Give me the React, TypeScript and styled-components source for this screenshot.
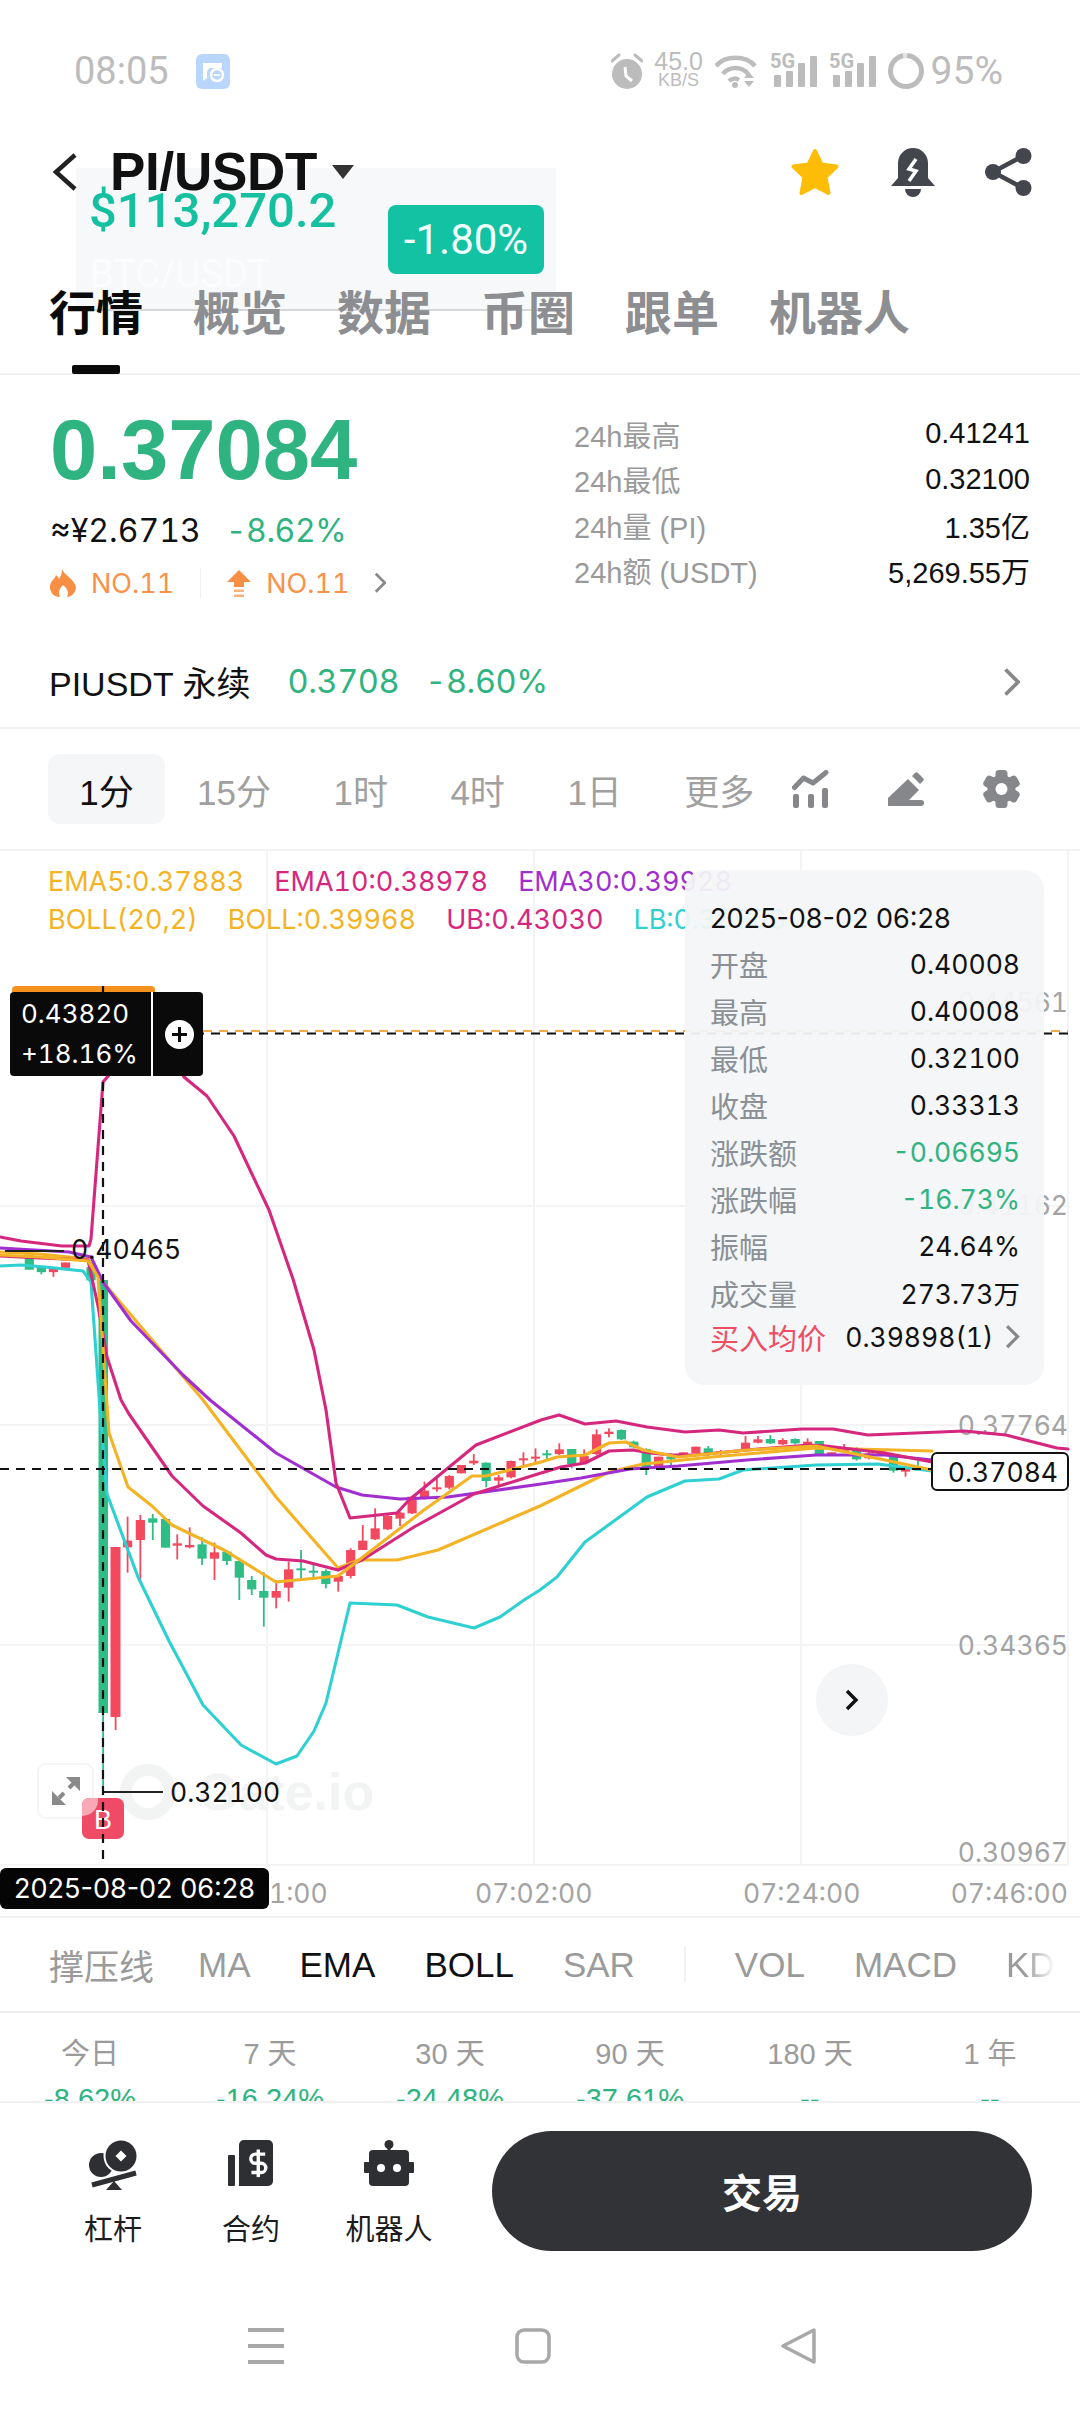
import React from 'react';
import styled, { createGlobalStyle } from 'styled-components';

const SANS = '"Liberation Sans", "Noto Sans CJK SC", sans-serif';
const CHART = 'Inter, "Noto Sans CJK SC", sans-serif';
const GREEN = '#2fb380';
const RED = '#f2495e';
const CANDLE_GREEN = '#2dbd85';
const MAGENTA = '#d6277f';
const ORANGE = '#f4b324';
const PURPLE = '#a12fd0';
const CYAN = '#2fd0d2';

const GlobalStyle = createGlobalStyle`
  html, body { margin: 0; padding: 0; background: #fff; }
  * { box-sizing: border-box; }
`;

const Page = styled.div`
  position: relative;
  width: 1080px;
  height: 2412px;
  overflow: hidden;
  background: #fff;
  font-family: ${SANS};
  color: #111;
`;

/* status bar */
const StatusBar = styled.div`
  height: 142px;
  padding: 0 77px 0 74px;
  display: flex;
  align-items: center;
  color: #bcbcbc;
`;
const Clock = styled.span`
  font-size: 38px;
  font-family: Roboto, sans-serif;
  margin-right: 27px;
`;
const StatusIcons = styled.div`
  margin-left: auto;
  display: flex;
  align-items: center;
  gap: 11px;
`;
const Speed = styled.div`
  width: 50px;
  display: flex;
  flex-direction: column;
  align-items: center;
  line-height: 19px;
  font-size: 25px;
  small { font-size: 18px; }
`;
const Battery = styled.span`
  font-size: 39px;
  font-family: Roboto, sans-serif;
  margin-left: -4px;
`;

/* header */
const NavRow = styled.div`
  height: 60px;
  padding: 0 48px 0 52px;
  display: flex;
  align-items: center;
  position: relative;
  z-index: 1;
`;
const Title = styled.span`
  font-size: 53px;
  font-weight: 700;
  letter-spacing: -0.3px;
  margin-left: 32px;
  margin-right: 15px;
  line-height: 60px;
`;
const NavActions = styled.div`
  margin-left: auto;
  display: flex;
  align-items: center;
`;
const PromoCard = styled.div`
  position: absolute;
  left: 76px;
  top: 168px;
  width: 480px;
  height: 143px;
  background: #f7f8f9;
  border-bottom: 2px solid #d6d7d8;
`;
const PromoPrice = styled.span`
  position: absolute;
  left: 13px;
  top: 14px;
  font-size: 49px;
  font-family: Roboto, sans-serif;
  font-weight: 500;
  color: #14c09f;
`;
const PromoBadge = styled.span`
  position: absolute;
  left: 312px;
  top: 37px;
  width: 156px;
  height: 69px;
  border-radius: 8px;
  background: #13c2a3;
  color: #f2fffc;
  display: flex;
  align-items: center;
  justify-content: center;
  font-size: 42px;
  font-family: Roboto, sans-serif;
`;
const PromoPair = styled.span`
  position: absolute;
  left: 14px;
  top: 84px;
  font-size: 38px;
  font-family: Roboto, sans-serif;
  color: #fbfcfc;
`;
const Tabs = styled.div`
  position: relative;
  height: 173px;
  padding: 90px 0 0 49px;
  display: flex;
  gap: 50px;
  border-bottom: 2px solid #f0f0f0;
`;
const Tab = styled.div<{ $active?: boolean }>`
  position: relative;
  font-size: 47px;
  line-height: 44px;
  font-weight: 700;
  height: 44px;
  color: ${(p) => (p.$active ? '#0a0a0a' : '#8c8e91')};
  ${(p) =>
    p.$active &&
    `&::after {
      content: '';
      position: absolute;
      left: 23px;
      top: 73px;
      width: 48px;
      height: 9px;
      border-radius: 2px;
      background: #0a0a0a;
    }`}
`;

/* price block */
const Info = styled.div`
  height: 261px;
  padding: 0 50px;
  display: flex;
  justify-content: space-between;
`;
const InfoLeft = styled.div`
  padding-top: 35px;
`;
const BigPrice = styled.div`
  font-size: 85px;
  line-height: 80px;
  font-weight: 700;
  color: ${GREEN};
`;
const FiatRow = styled.div`
  margin-top: 19px;
  display: flex;
  gap: 25px;
  font-family: ${CHART};
  font-variant-numeric: tabular-nums;
  font-size: 32px;
  line-height: 44px;
`;
const Change = styled.span`
  color: ${GREEN};
  font-family: ${CHART};
  font-variant-numeric: tabular-nums;
  letter-spacing: -0.4px;
`;
const RankRow = styled.div`
  margin-top: 10px;
  height: 40px;
  display: flex;
  align-items: center;
  font-family: ${CHART};
  font-variant-numeric: tabular-nums;
  font-size: 27px;
  color: #f9924a;
`;
const RankLabel = styled.span`
  margin-left: 15px;
`;
const RankDivider = styled.span`
  width: 1px;
  height: 30px;
  margin: 0 26px;
  background: #f0f0f0;
`;
const RankSpacer = styled.span`
  width: 24px;
`;
const InfoRight = styled.div`
  width: 456px;
  padding-top: 36px;
`;
const StatRow = styled.div`
  height: 45.5px;
  display: flex;
  justify-content: space-between;
  align-items: center;
  font-size: 29px;
`;
const StatLabel = styled.span`
  color: #9a9a9a;
`;

/* perpetual row */
const PerpRow = styled.div`
  height: 93px;
  padding: 0 60px 0 49px;
  display: flex;
  align-items: center;
  gap: 26px;
  font-size: 32.5px;
  border-bottom: 2px solid #efefef;
  svg { margin-left: auto; }
`;
const PerpName = styled.span`
  font-size: 34px;
  margin-right: 11px;
`;

/* time frames */
const TimeRow = styled.div`
  height: 122px;
  padding: 0 60px 0 48px;
  display: flex;
  align-items: center;
  font-size: 35px;
  color: #a0a0a0;
  border-bottom: 2px solid #f3f3f3;
`;
const ActiveFrame = styled.span`
  width: 117px;
  height: 70px;
  border-radius: 12px;
  background: #f5f6f7;
  color: #111;
  display: flex;
  align-items: center;
  justify-content: center;
`;
const Frames = styled.div`
  margin-left: 32px;
  display: flex;
  gap: 62.5px;
`;
const Tools = styled.div`
  margin-left: auto;
  display: flex;
  align-items: center;
  gap: 59px;
`;

/* chart */
const Chart = styled.div`
  position: relative;
  height: 1065px;
  font-family: ${CHART};
  font-variant-numeric: tabular-nums;
`;
const ChartSvg = styled.svg`
  position: absolute;
  inset: 0;
`;
const Legend = styled.div`
  position: relative;
  padding: 12px 0 0 48px;
  font-size: 27px;
  line-height: 38px;
`;
const LegendRow = styled.div`
  display: flex;
  gap: 30px;
  white-space: nowrap;
`;
const LegendItem = styled.span<{ $color: string }>`
  color: ${(p) => p.$color};
`;
const AxisText = styled.text`
  font-family: ${CHART};
  font-size: 26.5px;
  font-variant-numeric: tabular-nums;
  fill: #a3a3a3;
`;
const MarkText = styled.text`
  font-family: ${CHART};
  font-size: 26.5px;
  font-variant-numeric: tabular-nums;
  fill: #111;
`;
const HighTag = styled.div`
  position: absolute;
  left: 10px;
  top: 141px;
  width: 193px;
  height: 84px;
  border-radius: 4px;
  background: #0a0a0a;
  color: #fff;
  display: flex;
  font-size: 26px;
`;
const HighValues = styled.div`
  width: 143px;
  padding-left: 11px;
  display: flex;
  flex-direction: column;
  justify-content: center;
  gap: 10px;
  line-height: 30px;
  white-space: nowrap;
  border-right: 2px solid #fff;
`;
const PlusBadge = styled.span`
  flex: 1;
  display: flex;
  align-items: center;
  justify-content: center;
  padding-left: 2px;
`;
const Tooltip = styled.div`
  position: absolute;
  left: 685px;
  top: 19px;
  width: 359px;
  height: 515px;
  padding: 25px 24px 0 25px;
  border-radius: 20px;
  background: rgba(243, 245, 247, 0.94);
  font-size: 26.5px;
`;
const TipDate = styled.div`
  height: 43px;
  display: flex;
  align-items: center;
  font-size: 27px;
  font-variant-numeric: normal;
  margin-top: 2px;
`;
const TipRow = styled.div<{ $last?: boolean }>`
  height: 47px;
  display: flex;
  align-items: center;
  justify-content: space-between;
  white-space: nowrap;
  ${(p) => p.$last && 'margin-top: -3px;'}
`;
const TipLabel = styled.span<{ $buy?: boolean }>`
  font-size: 29px;
  color: ${(p) => (p.$buy ? '#ee4d62' : '#8a9095')};
`;
const TipValue = styled.span<{ $down?: boolean }>`
  display: flex;
  align-items: center;
  gap: 12px;
  color: ${(p) => (p.$down ? GREEN : '#111')};
`;
const LastTag = styled.div`
  position: absolute;
  left: 931px;
  top: 601px;
  width: 138px;
  height: 39px;
  border: 2px solid #111;
  border-radius: 6px;
  background: #fff;
  font-size: 26.5px;
  display: flex;
  align-items: center;
  justify-content: flex-end;
  padding-right: 9px;
`;
const NextButton = styled.div`
  position: absolute;
  left: 816px;
  top: 813px;
  width: 72px;
  height: 72px;
  border-radius: 50%;
  background: #f3f5f6;
  display: flex;
  align-items: center;
  justify-content: center;
`;
const DateTag = styled.div`
  position: absolute;
  left: 0;
  top: 1017px;
  width: 269px;
  height: 41px;
  border-radius: 6px;
  background: #050505;
  color: #fff;
  font-size: 27px;
  font-variant-numeric: normal;
  display: flex;
  align-items: center;
  justify-content: center;
  z-index: 2;
`;

/* indicators */
const IndicatorRow = styled.div`
  height: 97px;
  padding-left: 49px;
  display: flex;
  align-items: center;
  font-size: 35px;
  gap: 49px;
  border-top: 2px solid #f2f2f2;
  border-bottom: 2px solid #f0f0f0;
  white-space: nowrap;
`;
const Indicator = styled.span<{ $active?: boolean; $fade?: boolean; $tight?: boolean }>`
  color: ${(p) => (p.$active ? '#111' : '#9b9b9b')};
  ${(p) => p.$tight && 'margin-right: -5px;'}
  ${(p) => p.$fade && 'mask-image: linear-gradient(90deg, #000 40%, transparent 100%);'}
`;
const IndicatorDivider = styled.span`
  width: 2px;
  height: 35px;
  background: #f0f0f0;
`;

/* performance */
const Periods = styled.div`
  height: 88px;
  padding-top: 19px;
  overflow: hidden;
  display: grid;
  grid-template-columns: repeat(6, 180px);
  text-align: center;
  font-size: 29px;
  line-height: 44px;
`;
const PeriodName = styled.div`
  color: #9b9b9b;
`;
const PeriodValue = styled.div`
  margin-top: 1px;
  color: ${GREEN};
`;

/* footer */
const Footer = styled.div`
  height: 179px;
  padding: 28px 48px 0 44px;
  display: flex;
  align-items: flex-start;
  border-top: 2px solid #f1f1f1;
`;
const Shortcut = styled.div`
  width: 138px;
  height: 120px;
  display: flex;
  flex-direction: column;
  align-items: center;
  font-size: 29px;
  color: #1c1c1c;
  white-space: nowrap;
`;
const ShortcutIcon = styled.div`
  height: 62px;
  margin-top: 9px;
  margin-bottom: 4px;
  display: flex;
  align-items: flex-start;
`;
const TradeButton = styled.div`
  margin-left: 34px;
  width: 540px;
  height: 120px;
  border-radius: 60px;
  background: #323336;
  color: #fff;
  font-size: 40px;
  font-weight: 700;
  display: flex;
  align-items: center;
  justify-content: center;
`;
const SystemNav = styled.div`
  height: 132px;
  display: flex;
  align-items: center;
  position: relative;
  justify-content: space-between;
  padding: 0 263px 0 248px;
`;

/* chart data, page coordinates */
const UB =
  '0,1237 21,1241 62,1246 89,1246 91,1239 103,1082 110,1074 120,1050 170,1050 184,1077 207,1096 234,1136 269,1210 293,1279 314,1350 326,1410 336,1483 350,1518 397,1513 409,1500 476,1445 541,1420 559,1415 585,1424 616,1421 647,1427 685,1432 719,1430 743,1433 802,1429 833,1429 868,1435 964,1431 1006,1435 1057,1448 1068,1449';
const EMA10 =
  '0,1256 40,1258 88,1260 98,1306 107,1357 121,1400 129,1414 172,1476 203,1506 241,1533 266,1555 276,1559 303,1561 338,1570 362,1560 414,1527 474,1494 541,1473 561,1467 585,1463 609,1451 633,1450 650,1453 671,1455 695,1455 747,1450 809,1445 826,1446 885,1453 932,1462';
const EMA30 =
  '0,1248 69,1252 91,1257 103,1282 131,1321 183,1375 210,1400 276,1453 336,1487 362,1495 400,1499 448,1497 541,1484 581,1478 630,1469 678,1466 747,1460 816,1455 885,1455 932,1460';
const EMA5 =
  '0,1255 40,1257 88,1261 98,1277 109,1433 128,1487 152,1506 172,1525 224,1550 276,1582 338,1576 359,1560 424,1510 472,1476 486,1476 541,1462 557,1457 585,1455 609,1443 626,1442 643,1450 678,1457 747,1450 816,1446 885,1460 932,1470';
const BOLL =
  '0,1252 40,1254 88,1259 103,1282 203,1400 276,1497 338,1568 359,1560 397,1560 438,1550 540,1506 609,1472 643,1464 712,1457 816,1448 932,1451';
const LB =
  '0,1266 21,1265 45,1267 83,1271 91,1282 100,1410 107,1494 138,1577 169,1641 203,1705 241,1745 276,1764 297,1756 314,1731 326,1703 350,1603 397,1605 428,1617 474,1628 500,1617 524,1600 540,1590 557,1577 585,1542 647,1497 685,1481 719,1479 743,1470 816,1465 878,1464 932,1471';

type Candle = [number, number, number, number, number, 'r' | 'g'];

// sampled coords: x, wick top, wick bottom, body top, body bottom
const LEFT_CANDLES: Candle[] = [
  [370, 350, 518, 422, 442, 'r'], [407, 345, 545, 360, 420, 'r'], [443, 342, 420, 355, 368, 'g'],
  [480, 357, 443, 357, 443, 'g'], [514, 403, 478, 430, 437, 'r'], [550, 382, 445, 435, 442, 'r'],
  [586, 412, 495, 433, 476, 'g'], [622, 428, 540, 457, 476, 'r'], [658, 450, 495, 455, 483, 'g'],
  [694, 475, 600, 483, 533, 'g'], [730, 528, 585, 540, 568, 'g'], [765, 517, 680, 573, 593, 'g'],
  [801, 540, 625, 573, 593, 'r'], [837, 485, 605, 508, 563, 'r'], [873, 450, 535, 505, 510, 'g'],
  [909, 490, 535, 512, 518, 'g'], [945, 508, 565, 513, 552, 'g'], [981, 525, 575, 528, 545, 'r'],
  [1017, 445, 535, 450, 528, 'r'], [1052, 375, 450, 422, 450, 'r'], [1088, 325, 420, 385, 418, 'r'],
  [1124, 340, 390, 348, 388, 'r'], [1160, 335, 378, 338, 356, 'r'], [1195, 288, 342, 290, 340, 'r'],
  [1231, 245, 298, 272, 295, 'r'], [1267, 235, 275, 262, 268, 'r'], [1303, 225, 268, 228, 263, 'r'],
  [1338, 195, 220, 195, 220, 'r'], [1374, 162, 195, 182, 190, 'r'], [1410, 187, 262, 188, 243, 'g'],
  [1446, 225, 255, 232, 242, 'r'], [1482, 182, 235, 183, 232, 'r'], [1518, 157, 195, 175, 180, 'r'],
  [1553, 145, 190, 170, 176, 'r'],
];
const RIGHT_CANDLES: Candle[] = [
  [20, 150, 180, 160, 165, 'g'], [56, 130, 165, 148, 162, 'r'], [92, 147, 205, 147, 192, 'g'],
  [128, 148, 190, 168, 188, 'r'], [164, 88, 165, 103, 162, 'r'], [200, 85, 112, 95, 102, 'r'],
  [236, 88, 120, 90, 118, 'g'], [272, 122, 145, 125, 142, 'g'], [308, 145, 225, 147, 205, 'g'],
  [344, 170, 198, 170, 198, 'r'], [380, 160, 195, 170, 178, 'g'], [416, 157, 172, 157, 172, 'r'],
  [452, 140, 160, 140, 160, 'r'], [488, 138, 170, 145, 160, 'g'], [524, 150, 165, 153, 160, 'r'],
  [560, 150, 158, 150, 158, 'r'], [596, 108, 150, 128, 150, 'r'], [632, 108, 130, 118, 128, 'r'],
  [668, 105, 132, 117, 130, 'g'], [704, 115, 135, 120, 133, 'r'], [740, 115, 133, 117, 130, 'g'],
  [776, 115, 135, 125, 133, 'r'], [810, 123, 165, 123, 165, 'g'], [846, 157, 165, 157, 165, 'r'],
  [882, 132, 155, 142, 155, 'r'], [918, 142, 182, 145, 178, 'g'], [954, 150, 178, 160, 175, 'r'],
  [990, 155, 165, 155, 165, 'r'], [1025, 168, 218, 170, 212, 'g'], [1060, 205, 230, 205, 215, 'r'],
  [1096, 182, 210, 205, 208, 'g'],
];
const EDGE_CANDLES: Candle[] = [
  [85, 1130, 1175, 1130, 1175, 'g'], [120, 1170, 1188, 1170, 1182, 'g'], [155, 1172, 1195, 1172, 1182, 'r'],
  [190, 1155, 1170, 1155, 1170, 'r'], [264, 1168, 1205, 1168, 1205, 'g'],
];

const CandleMark = ({ x, wt, wb, bt, bb, kind }: { x: number; wt: number; wb: number; bt: number; bb: number; kind: 'r' | 'g' }) => {
  const fill = kind === 'r' ? RED : CANDLE_GREEN;
  return (
    <g fill={fill}>
      <rect x={x - 0.9} y={wt} width={1.8} height={wb - wt} />
      <rect x={x - 4.6} y={bt} width={9.2} height={Math.max(bb - bt, 2)} />
    </g>
  );
};

const candleSet = (list: Candle[], xBase: number, yBase: number, yScale: number) =>
  list.map(([x, wt, wb, bt, bb, k]) => (
    <CandleMark
      key={`${xBase}-${x}`}
      x={xBase + x / 2.9}
      wt={yBase + wt / yScale}
      wb={yBase + wb / yScale}
      bt={yBase + bt / yScale}
      bb={yBase + bb / yScale}
      kind={k}
    />
  ));

const Line = ({ points, color }: { points: string; color: string }) => (
  <polyline points={points} fill="none" stroke={color} strokeWidth={3.1} strokeLinejoin="round" strokeLinecap="round" />
);

const PriceChart = () => (
  <ChartSvg width={1080} height={1065} viewBox="0 851 1080 1065">
    {/* grid */}
    <g stroke="#f4f4f5" strokeWidth={2}>
      <line x1={267} y1={851} x2={267} y2={1865} />
      <line x1={534} y1={851} x2={534} y2={1865} />
      <line x1={801} y1={851} x2={801} y2={1865} />
      <line x1={1068} y1={851} x2={1068} y2={1865} />
      <line x1={0} y1={1206} x2={1068} y2={1206} />
      <line x1={0} y1={1425} x2={1068} y2={1425} />
      <line x1={0} y1={1645} x2={1068} y2={1645} />
      <line x1={0} y1={1865} x2={1068} y2={1865} />
    </g>
    {/* watermark */}
    <rect x={38} y={1764} width={55} height={54} rx={8} fill="#fff" stroke="#f5f5f5" strokeWidth={2} />
    <circle cx={148} cy={1792} r={22} fill="none" stroke="#f2f3f3" strokeWidth={12} />
    <text x={198} y={1810} fontFamily={SANS} fontWeight={700} fontSize={52} fill="#f2f3f3">
      Gate.io
    </text>
    <path d="M80 1777V1791L66 1777ZM52 1805V1791L66 1805Z" fill="#8a8a8a" />
    <path d="M59 1798L64 1793M69 1788L74 1783" stroke="#8a8a8a" strokeWidth={4} />
    {/* axis */}
    <AxisText x={1068} y={1012} textAnchor="end">0.44561</AxisText>
    <AxisText x={1068} y={1215} textAnchor="end">0.41162</AxisText>
    <AxisText x={1068} y={1435} textAnchor="end">0.37764</AxisText>
    <AxisText x={1068} y={1655} textAnchor="end">0.34365</AxisText>
    <AxisText x={1068} y={1862} textAnchor="end">0.30967</AxisText>
    <AxisText x={269} y={1903}>1:00</AxisText>
    <AxisText x={475} y={1903}>07:02:00</AxisText>
    <AxisText x={743} y={1903}>07:24:00</AxisText>
    <AxisText x={1068} y={1903} textAnchor="end">07:46:00</AxisText>
    {/* candles */}
    <rect x={102.2} y={1280} width={1.8} height={512} fill={CANDLE_GREEN} />
    <rect x={98.5} y={1280} width={9.5} height={433} fill={CANDLE_GREEN} />
    <rect x={110.5} y={1547} width={10} height={170} fill={RED} />
    <rect x={114.7} y={1717} width={1.8} height={13} fill={RED} />
    {candleSet(LEFT_CANDLES, 0, 1400, 3)}
    {candleSet(RIGHT_CANDLES, 540, 1400, 3)}
    {candleSet(EDGE_CANDLES, 0, 850, 2.8)}
    {/* indicator lines */}
    <Line points={LB} color={CYAN} />
    <Line points={BOLL} color={ORANGE} />
    <Line points={EMA30} color={PURPLE} />
    <Line points={EMA10} color={MAGENTA} />
    <Line points={EMA5} color={ORANGE} />
    <Line points={UB} color={MAGENTA} />
    {/* extreme marks */}
    <line x1={5} y1={1251} x2={64} y2={1251} stroke="#222" strokeWidth={2} />
    <MarkText x={71} y={1259}>0.40465</MarkText>
    <line x1={103} y1={1792} x2={163} y2={1792} stroke="#222" strokeWidth={2} />
    <MarkText x={170} y={1802}>0.32100</MarkText>
    <rect x={82} y={1798} width={42} height={41} rx={7} fill="#ef4b66" />
    <path d="M82 1816V1805a7 7 0 0 1 7-7H98a16 16 0 0 1-16 18Z" fill="#f9a9b6" />
    <text x={103} y={1829} textAnchor="middle" fontFamily={SANS} fontSize={27} fill="#fff">B</text>
    {/* crosshair */}
    <path d="M12 992V990a4 4 0 0 1 4-4H151a4 4 0 0 1 4 4V992Z" fill="#f5921e" />
    <line x1={203} y1={1031} x2={1068} y2={1031} stroke="#f5a94a" strokeWidth={2} strokeDasharray="9 7" />
    <line x1={203} y1={1033.5} x2={1068} y2={1033.5} stroke="#111" strokeWidth={2} strokeDasharray="9 7" strokeDashoffset={8} />
    <line x1={0} y1={1469} x2={932} y2={1469} stroke="#111" strokeWidth={2} strokeDasharray="9 7" />
    <line x1={103} y1={986} x2={103} y2={1865} stroke="#111" strokeWidth={2.2} strokeDasharray="9 7" />
  </ChartSvg>
);

/* icons */
const AlarmIcon = () => (
  <svg width={32} height={36} viewBox="0 0 32 36">
    <circle cx={16} cy={21} r={15} fill="#bcbcbc" />
    <path d="M1 8L8 2M31 8L24 2" stroke="#bcbcbc" strokeWidth={3} strokeLinecap="round" />
    <path d="M14 14L15 23L21 28" stroke="#fff" strokeWidth={3} fill="none" />
  </svg>
);
const WifiIcon = () => (
  <svg width={44} height={34} viewBox="0 0 44 34">
    <g fill="none" stroke="#bcbcbc" strokeWidth={4.5}>
      <path d="M1 12C10 1 31 1 40 12" />
      <path d="M8 20C14 12 27 12 33 20" />
      <path d="M14 27C17 24 21 24 24 26" />
    </g>
    <circle cx={20} cy={31} r={3} fill="#bcbcbc" />
    <path d="M29 24L34 18L39 24ZM29 27L39 27L34 33Z" fill="#bcbcbc" />
  </svg>
);
const SignalIcon = () => (
  <svg width={48} height={36} viewBox="0 0 48 36">
    <text x={0} y={15} fontFamily="Roboto, sans-serif" fontWeight={700} fontSize={20} fill="#bcbcbc">5G</text>
    <rect x={4} y={22} width={7} height={12} rx={1} fill="#bcbcbc" />
    <rect x={16} y={18} width={7} height={16} rx={1} fill="#bcbcbc" />
    <rect x={28} y={10} width={7} height={24} rx={1} fill="#bcbcbc" />
    <rect x={40} y={3} width={7} height={31} rx={1} fill="#bcbcbc" />
  </svg>
);
const BatteryRing = () => (
  <svg width={36} height={36} viewBox="0 0 36 36">
    <circle cx={18} cy={18} r={15.5} fill="none" stroke="#bcbcbc" strokeWidth={5} />
    <path d="M15 2.7A15.5 15.5 0 0 1 19 2.6" fill="none" stroke="#e4e4e4" strokeWidth={5} />
  </svg>
);
const AppNotice = () => (
  <svg width={34} height={35} viewBox="0 0 34 35">
    <rect width={34} height={35} rx={6} fill="#b9d7fc" />
    <path d="M7 9H26V14H15C12 14 11 17 11 20V24L7 27Z" fill="#fff" />
    <circle cx={21} cy={21} r={6} fill="none" stroke="#fff" strokeWidth={2.5} />
    <path d="M18 21H24" stroke="#fff" strokeWidth={2} />
  </svg>
);
const BackIcon = () => (
  <svg width={26} height={38} viewBox="0 0 26 38">
    <path d="M23 2L4 19L23 36" fill="none" stroke="#222" strokeWidth={4.5} />
  </svg>
);
const CaretDown = () => (
  <svg width={22} height={14} viewBox="0 0 22 14">
    <path d="M0 0H22L11 14Z" fill="#333" />
  </svg>
);
const StarIcon = () => (
  <svg width={52} height={50} viewBox="0 0 52 50" style={{ marginRight: 50 }}>
    <path
      d="M26 4L32.5 17.5L47.5 19.5L36.5 30L39.5 46L26 39L12.5 46L15.5 30L4.5 19.5L19.5 17.5Z"
      fill="#fdbc05"
      stroke="#fdbc05"
      strokeWidth={4}
      strokeLinejoin="round"
    />
  </svg>
);
const BellIcon = () => (
  <svg width={44} height={49} viewBox="0 0 44 49" style={{ marginRight: 50 }}>
    <path d="M7 15a15 15 0 0 1 30 0V30L44 38H0L7 30Z" fill="#43464d" />
    <path d="M14 41H30a8 8 0 0 1-16 0Z" fill="#43464d" />
    <path d="M25 11L18 21L25 23L18 33" fill="none" stroke="#fff" strokeWidth={3.5} />
  </svg>
);
const ShareIcon = () => (
  <svg width={47} height={48} viewBox="0 0 47 48">
    <circle cx={8} cy={24} r={8} fill="#43464d" />
    <circle cx={38.5} cy={8} r={8} fill="#43464d" />
    <circle cx={38.5} cy={40} r={8} fill="#43464d" />
    <path d="M38 8L8 24L38 40" fill="none" stroke="#43464d" strokeWidth={4.5} />
  </svg>
);
const FlameIcon = () => (
  <svg width={26} height={28} viewBox="0 0 26 28">
    <path
      d="M12 0C14 6 24 10 26 18C26 24 21 28 17 28C19 24 18 20 13 16C9 20 8 24 10 28C4 28 0 24 0 18C0 12 5 10 6 6C8 8 9 9 9 10C11 7 12 4 12 0Z"
      fill="#f98e45"
    />
  </svg>
);
const RiseIcon = () => (
  <svg width={24} height={27} viewBox="0 0 24 27">
    <path d="M12 0L24 12H17V17H7V12H0Z" fill="#f98e45" />
    <path d="M7 19.5H17V22H7ZM7 24.5H17V27H7Z" fill="#fbb27f" />
  </svg>
);
const ChevronSmall = ({ size = 1, color = '#888' }: { size?: number; color?: string }) => (
  <svg width={14 * size} height={24 * size} viewBox="0 0 14 24">
    <path d="M2 2L12 12L2 22" fill="none" stroke={color} strokeWidth={3} />
  </svg>
);
const ChartToolIcon = () => (
  <svg width={37} height={38} viewBox="0 0 37 38">
    <path d="M2.5 17.5L11.5 8L21 13L34 2.5" fill="none" stroke="#85878a" strokeWidth={5} strokeLinecap="round" strokeLinejoin="round" />
    <rect x={1} y={24} width={6} height={14} rx={2} fill="#85878a" />
    <rect x={16} y={24} width={6} height={14} rx={2} fill="#85878a" />
    <rect x={30} y={18} width={6} height={20} rx={2} fill="#85878a" />
  </svg>
);
const PencilToolIcon = () => (
  <svg width={36} height={36} viewBox="0 0 36 36">
    <path d="M0 35V27L20 8L31 19L21 29H33a3 3 0 0 1 0 6Z" fill="#85878a" />
    <path d="M24 5L27 2a2 2 0 0 1 3 0L35 7a2 2 0 0 1 0 3L32 13Z" fill="#85878a" />
  </svg>
);
const GearToolIcon = () => (
  <svg width={37} height={38} viewBox="-18.5 -19 37 38">
    <circle r={14} fill="#85878a" />
    {[0, 60, 120].map((a) => (
      <rect key={a} x={-6} y={-19} width={12} height={38} rx={3.5} fill="#85878a" transform={`rotate(${a})`} />
    ))}
    <circle r={6} fill="#fff" />
  </svg>
);
const LeverageIcon = () => (
  <svg width={48} height={50} viewBox="0 0 48 50">
    <circle cx={12} cy={25} r={12} fill="#2e2f32" />
    <circle cx={32} cy={16} r={17.5} fill="#fff" />
    <circle cx={32} cy={16} r={15.5} fill="#2e2f32" />
    <path d="M32 10.5L37.5 16L32 21.5L26.5 16Z" fill="#fff" />
    <path d="M3 45L47 33" stroke="#2e2f32" strokeWidth={5} />
    <path d="M17 50H33L25 41Z" fill="#2e2f32" />
  </svg>
);
const ContractIcon = () => (
  <svg width={46} height={46} viewBox="0 0 46 46">
    <rect x={0} y={15} width={7} height={31} rx={1} fill="#2e2f32" />
    <path d="M16 0H40a5 5 0 0 1 5 5V41a5 5 0 0 1-5 5H11V5a5 5 0 0 1 5-5Z" fill="#2e2f32" />
    <g transform="translate(16.5 9.5) scale(1.15)" fill="none" stroke="#fff" strokeWidth={3}>
      <path d="M12 0v24" />
      <path d="M18 4H9.5a4 4 0 0 0 0 8h5a4 4 0 0 1 0 8H6" />
    </g>
  </svg>
);
const RobotIcon = () => (
  <svg width={50} height={46} viewBox="0 0 50 46">
    <circle cx={25} cy={4.5} r={4.5} fill="#2e2f32" />
    <rect x={23.5} y={6} width={3} height={6} fill="#2e2f32" />
    <rect x={5} y={10} width={40} height={36} rx={4} fill="#2e2f32" />
    <rect x={0} y={22} width={6} height={11} rx={1} fill="#2e2f32" />
    <rect x={44} y={22} width={6} height={11} rx={1} fill="#2e2f32" />
    <circle cx={17} cy={28} r={4} fill="#fff" />
    <circle cx={33} cy={28} r={4} fill="#fff" />
  </svg>
);

const TIP_ROWS: [string, string, boolean?][] = [
  ['开盘', '0.40008'],
  ['最高', '0.40008'],
  ['最低', '0.32100'],
  ['收盘', '0.33313'],
  ['涨跌额', '-0.06695', true],
  ['涨跌幅', '-16.73%', true],
  ['振幅', '24.64%'],
  ['成交量', '273.73万'],
];
const STATS = [
  ['24h最高', '0.41241'],
  ['24h最低', '0.32100'],
  ['24h量 (PI)', '1.35亿'],
  ['24h额 (USDT)', '5,269.55万'],
];
const PERIODS = [
  ['今日', '-8.62%'],
  ['7 天', '-16.24%'],
  ['30 天', '-24.48%'],
  ['90 天', '-37.61%'],
  ['180 天', '--'],
  ['1 年', '--'],
];

const App = () => (
  <Page>
    <GlobalStyle />
    <StatusBar>
      <Clock>08:05</Clock>
      <AppNotice />
      <StatusIcons>
        <AlarmIcon />
        <Speed>
          45.0
          <small>KB/S</small>
        </Speed>
        <WifiIcon />
        <SignalIcon />
        <SignalIcon />
        <BatteryRing />
        <Battery>95%</Battery>
      </StatusIcons>
    </StatusBar>

    <PromoCard>
      <PromoPrice>$113,270.2</PromoPrice>
      <PromoBadge>-1.80%</PromoBadge>
      <PromoPair>BTC/USDT</PromoPair>
    </PromoCard>

    <NavRow>
      <BackIcon />
      <Title>PI/USDT</Title>
      <CaretDown />
      <NavActions>
        <StarIcon />
        <BellIcon />
        <ShareIcon />
      </NavActions>
    </NavRow>
    <Tabs>
      <Tab $active>行情</Tab>
      <Tab>概览</Tab>
      <Tab>数据</Tab>
      <Tab>币圈</Tab>
      <Tab>跟单</Tab>
      <Tab>机器人</Tab>
    </Tabs>

    <Info>
      <InfoLeft>
        <BigPrice>0.37084</BigPrice>
        <FiatRow>
          <span>≈¥2.6713</span>
          <Change>-8.62%</Change>
        </FiatRow>
        <RankRow>
          <FlameIcon />
          <RankLabel>NO.11</RankLabel>
          <RankDivider />
          <RiseIcon />
          <RankLabel>NO.11</RankLabel>
          <RankSpacer />
          <ChevronSmall size={0.9} />
        </RankRow>
      </InfoLeft>
      <InfoRight>
        {STATS.map(([label, value]) => (
          <StatRow key={label}>
            <StatLabel>{label}</StatLabel>
            <span>{value}</span>
          </StatRow>
        ))}
      </InfoRight>
    </Info>

    <PerpRow>
      <PerpName>PIUSDT 永续</PerpName>
      <Change>0.3708</Change>
      <Change>-8.60%</Change>
      <ChevronSmall size={1.25} />
    </PerpRow>

    <TimeRow>
      <ActiveFrame>1分</ActiveFrame>
      <Frames>
        <span>15分</span>
        <span>1时</span>
        <span>4时</span>
        <span>1日</span>
        <span>更多</span>
      </Frames>
      <Tools>
        <ChartToolIcon />
        <PencilToolIcon />
        <GearToolIcon />
      </Tools>
    </TimeRow>

    <Chart>
      <PriceChart />
      <Legend>
        <LegendRow>
          <LegendItem $color={ORANGE}>EMA5:0.37883</LegendItem>
          <LegendItem $color={MAGENTA}>EMA10:0.38978</LegendItem>
          <LegendItem $color={PURPLE}>EMA30:0.39928</LegendItem>
        </LegendRow>
        <LegendRow>
          <LegendItem $color={ORANGE}>BOLL(20,2)</LegendItem>
          <LegendItem $color={ORANGE}>BOLL:0.39968</LegendItem>
          <LegendItem $color={MAGENTA}>UB:0.43030</LegendItem>
          <LegendItem $color={CYAN}>LB:0.36906</LegendItem>
        </LegendRow>
      </Legend>
      <HighTag>
        <HighValues>
          <span>0.43820</span>
          <span>+18.16%</span>
        </HighValues>
        <PlusBadge>
          <svg width={29} height={29} viewBox="0 0 29 29">
            <circle cx={14.5} cy={14.5} r={14.5} fill="#fff" />
            <path d="M14.5 7V22M7 14.5H22" stroke="#0a0a0a" strokeWidth={3} />
          </svg>
        </PlusBadge>
      </HighTag>
      <Tooltip>
        <TipDate>2025-08-02 06:28</TipDate>
        {TIP_ROWS.map(([label, value, down]) => (
          <TipRow key={label}>
            <TipLabel>{label}</TipLabel>
            <TipValue $down={down}>{value}</TipValue>
          </TipRow>
        ))}
        <TipRow $last>
          <TipLabel $buy>买入均价</TipLabel>
          <TipValue>
            0.39898(1)
            <ChevronSmall size={1.05} />
          </TipValue>
        </TipRow>
      </Tooltip>
      <LastTag>0.37084</LastTag>
      <NextButton>
        <svg width={14} height={22} viewBox="0 0 14 22">
          <path d="M2 2L11 11L2 20" fill="none" stroke="#111" strokeWidth={3.4} />
        </svg>
      </NextButton>
      <DateTag>2025-08-02 06:28</DateTag>
    </Chart>

    <IndicatorRow>
      <Indicator $tight>撑压线</Indicator>
      <Indicator>MA</Indicator>
      <Indicator $active>EMA</Indicator>
      <Indicator $active>BOLL</Indicator>
      <Indicator>SAR</Indicator>
      <IndicatorDivider />
      <Indicator>VOL</Indicator>
      <Indicator>MACD</Indicator>
      <Indicator $fade>KD</Indicator>
    </IndicatorRow>

    <Periods>
      {PERIODS.map(([name, value]) => (
        <div key={name}>
          <PeriodName>{name}</PeriodName>
          <PeriodValue>{value}</PeriodValue>
        </div>
      ))}
    </Periods>

    <Footer>
      <Shortcut>
        <ShortcutIcon>
          <LeverageIcon />
        </ShortcutIcon>
        杠杆
      </Shortcut>
      <Shortcut>
        <ShortcutIcon>
          <ContractIcon />
        </ShortcutIcon>
        合约
      </Shortcut>
      <Shortcut>
        <ShortcutIcon>
          <RobotIcon />
        </ShortcutIcon>
        机器人
      </Shortcut>
      <TradeButton>交易</TradeButton>
    </Footer>

    <SystemNav>
      <svg width={36} height={36} viewBox="0 0 36 36">
        <path d="M0 2H36M0 18H36M0 34H36" stroke="#a8a8a8" strokeWidth={4} />
      </svg>
      <svg width={36} height={36} viewBox="0 0 36 36">
        <rect x={2} y={2} width={32} height={32} rx={7} fill="none" stroke="#a8a8a8" strokeWidth={3.5} />
      </svg>
      <svg width={36} height={36} viewBox="0 0 36 36">
        <path d="M33 2V34L2 18Z" fill="none" stroke="#a8a8a8" strokeWidth={3.5} strokeLinejoin="round" />
      </svg>
    </SystemNav>
  </Page>
);

export default App;
